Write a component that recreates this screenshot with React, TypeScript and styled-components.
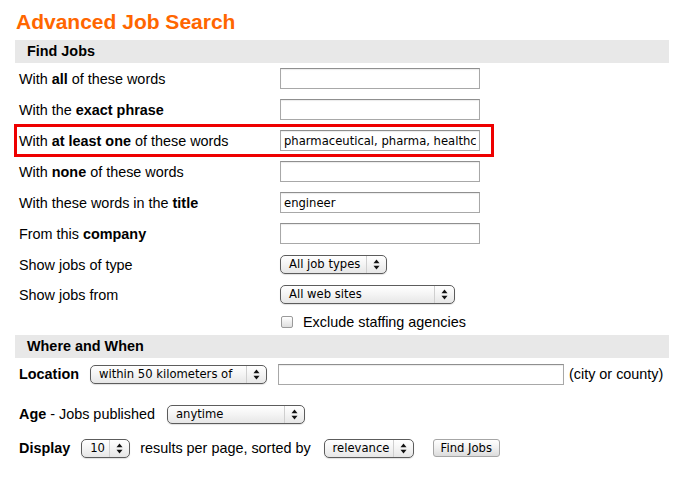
import styled, { createGlobalStyle } from 'styled-components'

const Global = createGlobalStyle`
  body {
    margin: 0;
    background: #fff;
    color: #000;
    font-family: 'Liberation Sans', Arial, Helvetica, sans-serif;
    font-size: 14.4px;
  }
`

const Page = styled.div`
  width: 654px;
  margin-left: 15px;
  padding-top: 10px;
`

const Title = styled.h1`
  margin: 0 0 6px 1px;
  font-size: 21px;
  line-height: 24px;
  font-weight: bold;
  color: #ff6600;
`

const SectionBar = styled.div`
  height: 23px;
  line-height: 23px;
  padding-left: 12px;
  background: #e8e8e8;
  font-weight: bold;
`

const FieldRow = styled.div<{ $h?: number; $highlight?: boolean }>`
  display: grid;
  grid-template-columns: 261px auto;
  align-items: center;
  width: 478px;
  height: ${p => p.$h ?? 31}px;
  padding-left: 4px;
  box-sizing: border-box;
  outline: ${p => (p.$highlight ? '3px solid #ee0000' : 'none')};
  outline-offset: -2px;

  b {
    font-weight: bold;
  }
`

const Field = styled.div`
  display: flex;
  align-items: center;
`

const TextField = styled.input<{ $w?: number; $ml?: number }>`
  width: ${p => p.$w ?? 200}px;
  height: 21px;
  margin: 0 0 0 ${p => p.$ml ?? 0}px;
  padding: 0 3px;
  box-sizing: border-box;
  border: 1px solid #a8a8a8;
  border-top-color: #8f8f8f;
  box-shadow: inset 0 1px 1px rgba(0, 0, 0, 0.08);
  font-family: 'DejaVu Sans', Verdana, sans-serif;
  font-size: 11.6px;
  color: #000;
  background: #fff;
  outline: none;
`

const SelectBox = styled.div<{ $w: number; $ml?: number }>`
  display: flex;
  align-items: stretch;
  width: ${p => p.$w}px;
  height: 19px;
  margin-left: ${p => p.$ml ?? 0}px;
  box-sizing: border-box;
  border: 1px solid #5c5c5c;
  border-radius: 5px;
  background: linear-gradient(#ffffff, #f4f4f4 50%, #e6e6e6);
  box-shadow: 0 1px 1px rgba(0, 0, 0, 0.12);
  font-family: 'DejaVu Sans', Verdana, sans-serif;
  font-size: 11.6px;
  flex-shrink: 0;
`

const SelectValue = styled.span`
  flex: 1;
  padding-left: 8px;
  line-height: 17px;
  white-space: nowrap;
  overflow: hidden;
`

const SelectArrows = styled.span`
  width: 19px;
  display: flex;
  align-items: center;
  justify-content: center;
  border-left: 1px solid #cfcfcf;
`

const Arrows = () => (
  <svg width="7" height="11" viewBox="0 0 7 11">
    <path d="M3.5 0.5 L6.5 4.2 L0.5 4.2 Z" fill="#111" />
    <path d="M0.5 6.8 L6.5 6.8 L3.5 10.5 Z" fill="#111" />
  </svg>
)

const Select = ({ value, w, ml }: { value: string; w: number; ml?: number }) => (
  <SelectBox $w={w} $ml={ml}>
    <SelectValue>{value}</SelectValue>
    <SelectArrows>
      <Arrows />
    </SelectArrows>
  </SelectBox>
)

const CheckBox = styled.span`
  display: inline-block;
  width: 12px;
  height: 12px;
  margin-left: 1px;
  box-sizing: border-box;
  border: 1px solid #9a9a9a;
  border-radius: 2px;
  background: linear-gradient(#ffffff, #dedede);
`

const CheckLabel = styled.span`
  margin-left: 10px;
`

const WhereRow = styled.div<{ $top?: number }>`
  display: flex;
  align-items: center;
  height: 32px;
  margin-top: ${p => p.$top ?? 0}px;
  padding-left: 4px;
  white-space: nowrap;

  b {
    font-weight: bold;
  }
`

const Text = styled.span<{ $ml?: number }>`
  margin-left: ${p => p.$ml ?? 0}px;
`

const Button = styled.button<{ $ml?: number }>`
  height: 18px;
  margin-left: ${p => p.$ml ?? 0}px;
  padding: 0 7px;
  border: 1px solid #a6a6a6;
  border-radius: 3px;
  background: linear-gradient(#ffffff, #f0f0f0 50%, #dcdcdc);
  font-family: 'DejaVu Sans', Verdana, sans-serif;
  font-size: 11.6px;
  color: #000;
  line-height: 16px;
`

const fields: { label: React.ReactNode; value?: string; highlight?: boolean }[] = [
  { label: <>With <b>all</b> of these words</> },
  { label: <>With the <b>exact phrase</b></> },
  { label: <>With <b>at least one</b> of these words</>, value: 'pharmaceutical, pharma, healthcare', highlight: true },
  { label: <>With <b>none</b> of these words</> },
  { label: <>With these words in the <b>title</b></>, value: 'engineer' },
  { label: <>From this <b>company</b></> },
]

export default function App() {
  return (
    <>
      <Global />
      <Page>
        <Title>Advanced Job Search</Title>

        <SectionBar>Find Jobs</SectionBar>
        {fields.map((f, i) => (
          <FieldRow key={i} $highlight={f.highlight}>
            <span>{f.label}</span>
            <Field>
              <TextField defaultValue={f.value} />
            </Field>
          </FieldRow>
        ))}
        <FieldRow>
          <span>Show jobs of type</span>
          <Field>
            <Select value="All job types" w={107} />
          </Field>
        </FieldRow>
        <FieldRow $h={29}>
          <span>Show jobs from</span>
          <Field>
            <Select value="All web sites" w={175} />
          </Field>
        </FieldRow>
        <FieldRow $h={26}>
          <span />
          <Field>
            <CheckBox />
            <CheckLabel>Exclude staffing agencies</CheckLabel>
          </Field>
        </FieldRow>

        <SectionBar>Where and When</SectionBar>
        <WhereRow>
          <b>Location</b>
          <Select value="within 50 kilometers of" w={177} ml={11} />
          <TextField $w={286} $ml={11} />
          <Text $ml={5}>(city or county)</Text>
        </WhereRow>
        <WhereRow $top={8}>
          <b>Age</b>
          <Text>&nbsp;- Jobs published</Text>
          <Select value="anytime" w={138} ml={12} />
        </WhereRow>
        <WhereRow $top={2}>
          <b>Display</b>
          <Select value="10" w={49} ml={11} />
          <Text $ml={10}>results per page, sorted by</Text>
          <Select value="relevance" w={90} ml={13} />
          <Button $ml={19}>Find Jobs</Button>
        </WhereRow>
      </Page>
    </>
  )
}
